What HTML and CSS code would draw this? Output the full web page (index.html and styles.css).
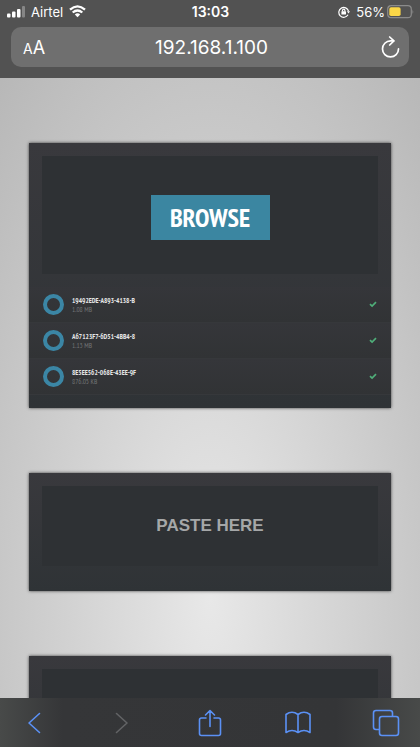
FILE: index.html
```html
<!DOCTYPE html>
<html lang="en">
<head>
<meta charset="utf-8">
<meta name="viewport" content="width=device-width, initial-scale=1">
<title>Upload</title>
<link rel="stylesheet" href="styles.css">
</head>
<body>
<header class="top">
  <div class="status">
    <div class="status-left">
      <svg width="18" height="12" viewBox="0 0 18 12" fill="#fff"><rect y="7.5" width="3.5" height="4" rx="1"/><rect x="5" y="5.500" width="3.500" height="6" rx="1"/><rect x="10" y="3" width="3.500" height="8.500" rx="1"/><rect x="15" y="0" width="3" height="11.500" rx="1" opacity=".3"/></svg>
      <span>Airtel</span>
      <svg width="17" height="13" viewBox="0 0 17 13" fill="none" stroke="#fff" stroke-width="2.300"><path d="M1 4.700Q8.500-2 16 4.700M3.700 7.500Q8.500 3.400 13.300 7.500"/><path d="M5.800 9.400Q8.500 7.200 11.200 9.400L8.500 12.300Z" fill="#fff" stroke="none"/></svg>
    </div>
    <time class="clock">13:03</time>
    <div class="status-right">
      <svg class="lock" width="12" height="12" viewBox="0 0 12 12" fill="none" stroke="#fff" stroke-width="1.200"><path d="M10 8.800A4.900 4.900 0 1 1 10.500 5.200"/><path d="M8.900 5.300h3.100l-1.500 2.200z" fill="#fff" stroke="none"/><rect x="3.400" y="5.200" width="4.600" height="3.400" rx=".5" fill="#fff" stroke="none"/><path d="M4.500 5.500V4.400a1.200 1.200 0 0 1 2.400 0v1.100"/></svg>
      <span>56%</span>
      <svg width="27" height="14" viewBox="0 0 27 14"><rect x=".7" y=".7" width="23.600" height="12" rx="3.500" fill="none" stroke="#8b8b8b" stroke-width="1.200"/><rect x="2.300" y="2.300" width="11.300" height="8.800" rx="1.800" fill="#fbd747"/><path d="M25.500 4.500q1.500 2.200 0 4.400z" fill="#8b8b8b"/></svg>
    </div>
  </div>
  <div class="address">
    <button class="reader" aria-label="Text size"><span class="small-a">A</span>A</button>
    <span class="host">192.168.1.100</span>
    <button class="reload" aria-label="Reload"><svg width="19" height="22" viewBox="0 0 19 22" fill="none" stroke="#fff" stroke-width="1.700" stroke-linecap="round" stroke-linejoin="round"><path d="M12.500 4.900H9.500a8 8 0 1 0 8 8"/><path d="M8.700 1l4.200 3.900L8.700 9"/></svg></button>
  </div>
</header>
<main class="page">
  <section class="card">
    <div class="drop uploads"><button class="browse">BROWSE</button></div>
    <ul class="files">
      <li><span class="ring"></span><div class="info"><p class="name">19492EDE-A893-4138-B</p><p class="size">1.08 MB</p></div><svg class="check" width="8" height="7" viewBox="0 0 8 7"><path d="M1 3.100L3.100 5.100L7 1.200"/></svg></li>
      <li><span class="ring"></span><div class="info"><p class="name">A67123F7-6D51-4BB4-8</p><p class="size">1.13 MB</p></div><svg class="check" width="8" height="7" viewBox="0 0 8 7"><path d="M1 3.100L3.100 5.100L7 1.200"/></svg></li>
      <li><span class="ring"></span><div class="info"><p class="name">8E5EE562-068E-43EE-9F</p><p class="size">876.05 KB</p></div><svg class="check" width="8" height="7" viewBox="0 0 8 7"><path d="M1 3.100L3.100 5.100L7 1.200"/></svg></li>
    </ul>
  </section>
  <section class="card paste"><div class="drop">PASTE HERE</div></section>
  <section class="card paste"><div class="drop"></div></section>
</main>
<nav class="toolbar">
  <button aria-label="Back"><svg width="14" height="22" viewBox="0 0 14 22"><path d="M12.500 1.500L2 11l10.500 9.500"/></svg></button>
  <button aria-label="Forward" disabled><svg width="14" height="22" viewBox="0 0 14 22"><path d="M1.500 1.500L12 11 1.500 20.500"/></svg></button>
  <button aria-label="Share"><svg width="24" height="28" viewBox="0 0 24 28"><path d="M8 9H3.500Q1.500 9 1.500 11V24.500Q1.500 26.500 3.500 26.500H20.500Q22.500 26.500 22.500 24.500V11Q22.500 9 20.500 9H16M12 17.500V1.500M7.500 6L12 1.500 16.500 6"/></svg></button>
  <button aria-label="Bookmarks"><svg width="26" height="23" viewBox="0 0 26 23"><path d="M13 3.500Q7-1 1 3.500V21.500Q7 17.500 13 21.500Q19 17.500 25 21.500V3.500Q19-1 13 3.500ZM13 3.500V21.500"/></svg></button>
  <button aria-label="Tabs"><svg width="28" height="28" viewBox="0 0 28 28"><path d="M7 20.500H4Q1.500 20.500 1.500 18V4Q1.500 1.500 4 1.500H18Q20.500 1.500 20.500 4V7"/><rect x="7.500" y="7.500" width="19" height="19" rx="2.500"/></svg></button>
</nav>
</body>
</html>
```

FILE: styles.css
```css
* { box-sizing: border-box; }
body {
  margin: 0;
  height: 100vh;
  display: flex;
  flex-direction: column;
  overflow: hidden;
  font-family: Inter, "Liberation Sans", sans-serif;
  color: #fff;
}
button {
  border: 0;
  padding: 0;
  background: none;
  color: inherit;
  font: inherit;
  display: flex;
  align-items: center;
  justify-content: center;
}
svg { display: block; flex: none; }
p, ul { margin: 0; padding: 0; list-style: none; }

.top { flex: none; background: #525252; padding-bottom: 11px; }
.status {
  display: grid;
  grid-template-columns: 1fr auto 1fr;
  align-items: center;
  height: 27px;
  padding: 0 6px 4px 7px;
  font-size: 13px;
}
.status-left, .status-right { display: flex; align-items: center; gap: 6px; }
.status-right { justify-content: flex-end; gap: 2px; }
.lock { margin-right: 4px; }
.clock { font-size: 14px; font-weight: 600; }
.address {
  display: grid;
  grid-template-columns: 1fr auto 1fr;
  align-items: center;
  height: 40px;
  margin: 0 11px;
  padding: 0 9px 0 12px;
  border-radius: 10px;
  background: #6f6f6f;
}
.host { font-size: 19px; }
.reader { justify-self: start; align-items: baseline; font-size: 18px; }
.small-a { font-size: 14px; }
.reload { justify-self: end; }

.page {
  flex: 1;
  min-height: 0;
  overflow: hidden;
  display: flex;
  flex-direction: column;
  gap: 65px;
  padding: 65px 29px 0;
  background: radial-gradient(360px 820px at 50% 84%, #e8e8e8, #b0b0b0);
}
.card {
  flex: none;
  padding: 13px;
  background: linear-gradient(#39393d, #2f3336);
  box-shadow: 0 0 3px rgba(0, 0, 0, .7);
}
.drop {
  display: flex;
  align-items: center;
  justify-content: center;
  height: 118px;
  background: #2e3134;
}
.uploads { padding-top: 5px; }
.browse {
  width: 119px;
  height: 45px;
  background: #3b86a1;
  font: bold 26px "PT Sans Narrow", "Liberation Sans Narrow", "Liberation Sans", sans-serif;
}
.files { margin: 13px -13px 0; }
.files li {
  display: flex;
  align-items: center;
  height: 36px;
  padding: 0 14px;
  border-bottom: 1px solid #36383b;
  background: linear-gradient(#35363a, #313335);
}
.ring { width: 21px; height: 21px; border: 4px solid #3b86a5; border-radius: 50%; }
.info {
  flex: 1;
  padding-left: 8px;
  font: 7px/9px "PT Sans Narrow", "Liberation Sans Narrow", "Liberation Sans", sans-serif;
}
.name { font-weight: bold; color: #e6e6e6; }
.size { color: #727476; }
.check { fill: none; stroke: #4fae79; stroke-width: 1.700; }
.paste { padding-bottom: 25px; }
.paste .drop {
  height: 80px;
  color: #a5a7a8;
  font: bold 17px "Liberation Sans", sans-serif;
}

.toolbar {
  flex: none;
  display: flex;
  align-items: center;
  justify-content: space-between;
  height: 49px;
  padding: 0 20px;
  background: linear-gradient(90deg, #484a49, #353638 15%, #343537 80%, #484a49);
}
.toolbar button { width: 28px; height: 28px; }
.toolbar svg {
  fill: none;
  stroke: #5b91f5;
  stroke-width: 1.600;
  stroke-linecap: round;
  stroke-linejoin: round;
}
.toolbar button:disabled svg { stroke: #626365; }
```
